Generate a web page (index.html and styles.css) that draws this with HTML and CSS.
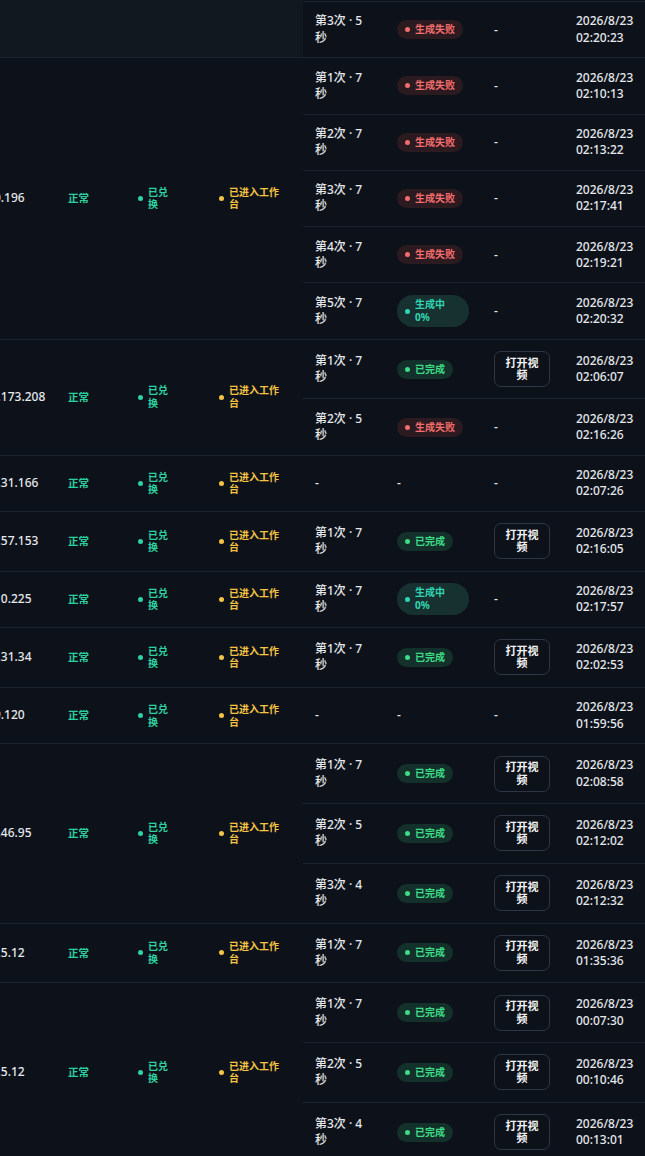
FILE: index.html
```html
<!DOCTYPE html>
<html lang="zh-CN">
<head>
<meta charset="utf-8">
<title>生成记录</title>
<link rel="stylesheet" href="styles.css">
</head>
<body>
<div class="viewport">
  <div class="table">

    <div class="group partial">
      <div class="lefts"><div class="c c-ip"></div><div class="c c-st"></div><div class="c c-rd"></div><div class="c c-wb"></div></div>
      <div class="subs">
        <div class="sub"><div class="s s-cnt"><span class="cnt">第3次 · 5 秒</span></div><div class="s s-st"><span class="badge fail"><i class="dot"></i>生成失败</span></div><div class="s s-vd">-</div><div class="s s-tm"><span>2026/8/23</span><span>02:20:23</span></div></div>
      </div>
    </div>

    <div class="group">
      <div class="lefts"><div class="c c-ip">36.8.10.196</div><div class="c c-st"><span class="ok">正常</span></div><div class="c c-rd"><span class="tag teal"><i class="dot"></i><span class="t2">已兑换</span></span></div><div class="c c-wb"><span class="tag amber"><i class="dot"></i><span class="t5">已进入工作台</span></span></div></div>
      <div class="subs">
        <div class="sub"><div class="s s-cnt"><span class="cnt">第1次 · 7 秒</span></div><div class="s s-st"><span class="badge fail"><i class="dot"></i>生成失败</span></div><div class="s s-vd">-</div><div class="s s-tm"><span>2026/8/23</span><span>02:10:13</span></div></div>
        <div class="sub"><div class="s s-cnt"><span class="cnt">第2次 · 7 秒</span></div><div class="s s-st"><span class="badge fail"><i class="dot"></i>生成失败</span></div><div class="s s-vd">-</div><div class="s s-tm"><span>2026/8/23</span><span>02:13:22</span></div></div>
        <div class="sub"><div class="s s-cnt"><span class="cnt">第3次 · 7 秒</span></div><div class="s s-st"><span class="badge fail"><i class="dot"></i>生成失败</span></div><div class="s s-vd">-</div><div class="s s-tm"><span>2026/8/23</span><span>02:17:41</span></div></div>
        <div class="sub"><div class="s s-cnt"><span class="cnt">第4次 · 7 秒</span></div><div class="s s-st"><span class="badge fail"><i class="dot"></i>生成失败</span></div><div class="s s-vd">-</div><div class="s s-tm"><span>2026/8/23</span><span>02:19:21</span></div></div>
        <div class="sub"><div class="s s-cnt"><span class="cnt">第5次 · 7 秒</span></div><div class="s s-st"><span class="badge prog"><i class="dot"></i><span>生成中<br>0%</span></span></div><div class="s s-vd">-</div><div class="s s-tm"><span>2026/8/23</span><span>02:20:32</span></div></div>
      </div>
    </div>

    <div class="group">
      <div class="lefts"><div class="c c-ip">112.64.173.208</div><div class="c c-st"><span class="ok">正常</span></div><div class="c c-rd"><span class="tag teal"><i class="dot"></i><span class="t2">已兑换</span></span></div><div class="c c-wb"><span class="tag amber"><i class="dot"></i><span class="t5">已进入工作台</span></span></div></div>
      <div class="subs">
        <div class="sub"><div class="s s-cnt"><span class="cnt">第1次 · 7 秒</span></div><div class="s s-st"><span class="badge done"><i class="dot"></i>已完成</span></div><div class="s s-vd"><button class="btn">打开视频</button></div><div class="s s-tm"><span>2026/8/23</span><span>02:06:07</span></div></div>
        <div class="sub"><div class="s s-cnt"><span class="cnt">第2次 · 5 秒</span></div><div class="s s-st"><span class="badge fail"><i class="dot"></i>生成失败</span></div><div class="s s-vd">-</div><div class="s s-tm"><span>2026/8/23</span><span>02:16:26</span></div></div>
      </div>
    </div>

    <div class="group">
      <div class="lefts"><div class="c c-ip">183.12.31.166</div><div class="c c-st"><span class="ok">正常</span></div><div class="c c-rd"><span class="tag teal"><i class="dot"></i><span class="t2">已兑换</span></span></div><div class="c c-wb"><span class="tag amber"><i class="dot"></i><span class="t5">已进入工作台</span></span></div></div>
      <div class="subs">
        <div class="sub"><div class="s s-cnt">-</div><div class="s s-st">-</div><div class="s s-vd">-</div><div class="s s-tm"><span>2026/8/23</span><span>02:07:26</span></div></div>
      </div>
    </div>

    <div class="group">
      <div class="lefts"><div class="c c-ip">27.115.57.153</div><div class="c c-st"><span class="ok">正常</span></div><div class="c c-rd"><span class="tag teal"><i class="dot"></i><span class="t2">已兑换</span></span></div><div class="c c-wb"><span class="tag amber"><i class="dot"></i><span class="t5">已进入工作台</span></span></div></div>
      <div class="subs">
        <div class="sub"><div class="s s-cnt"><span class="cnt">第1次 · 7 秒</span></div><div class="s s-st"><span class="badge done"><i class="dot"></i>已完成</span></div><div class="s s-vd"><button class="btn">打开视频</button></div><div class="s s-tm"><span>2026/8/23</span><span>02:16:05</span></div></div>
      </div>
    </div>

    <div class="group">
      <div class="lefts"><div class="c c-ip">61.48.10.225</div><div class="c c-st"><span class="ok">正常</span></div><div class="c c-rd"><span class="tag teal"><i class="dot"></i><span class="t2">已兑换</span></span></div><div class="c c-wb"><span class="tag amber"><i class="dot"></i><span class="t5">已进入工作台</span></span></div></div>
      <div class="subs">
        <div class="sub"><div class="s s-cnt"><span class="cnt">第1次 · 7 秒</span></div><div class="s s-st"><span class="badge prog"><i class="dot"></i><span>生成中<br>0%</span></span></div><div class="s s-vd">-</div><div class="s s-tm"><span>2026/8/23</span><span>02:17:57</span></div></div>
      </div>
    </div>

    <div class="group">
      <div class="lefts"><div class="c c-ip">112.96.31.34</div><div class="c c-st"><span class="ok">正常</span></div><div class="c c-rd"><span class="tag teal"><i class="dot"></i><span class="t2">已兑换</span></span></div><div class="c c-wb"><span class="tag amber"><i class="dot"></i><span class="t5">已进入工作台</span></span></div></div>
      <div class="subs">
        <div class="sub"><div class="s s-cnt"><span class="cnt">第1次 · 7 秒</span></div><div class="s s-st"><span class="badge done"><i class="dot"></i>已完成</span></div><div class="s s-vd"><button class="btn">打开视频</button></div><div class="s s-tm"><span>2026/8/23</span><span>02:02:53</span></div></div>
      </div>
    </div>

    <div class="group">
      <div class="lefts"><div class="c c-ip">14.7.29.120</div><div class="c c-st"><span class="ok">正常</span></div><div class="c c-rd"><span class="tag teal"><i class="dot"></i><span class="t2">已兑换</span></span></div><div class="c c-wb"><span class="tag amber"><i class="dot"></i><span class="t5">已进入工作台</span></span></div></div>
      <div class="subs">
        <div class="sub"><div class="s s-cnt">-</div><div class="s s-st">-</div><div class="s s-vd">-</div><div class="s s-tm"><span>2026/8/23</span><span>01:59:56</span></div></div>
      </div>
    </div>

    <div class="group">
      <div class="lefts"><div class="c c-ip">223.10.46.95</div><div class="c c-st"><span class="ok">正常</span></div><div class="c c-rd"><span class="tag teal"><i class="dot"></i><span class="t2">已兑换</span></span></div><div class="c c-wb"><span class="tag amber"><i class="dot"></i><span class="t5">已进入工作台</span></span></div></div>
      <div class="subs">
        <div class="sub"><div class="s s-cnt"><span class="cnt">第1次 · 7 秒</span></div><div class="s s-st"><span class="badge done"><i class="dot"></i>已完成</span></div><div class="s s-vd"><button class="btn">打开视频</button></div><div class="s s-tm"><span>2026/8/23</span><span>02:08:58</span></div></div>
        <div class="sub"><div class="s s-cnt"><span class="cnt">第2次 · 5 秒</span></div><div class="s s-st"><span class="badge done"><i class="dot"></i>已完成</span></div><div class="s s-vd"><button class="btn">打开视频</button></div><div class="s s-tm"><span>2026/8/23</span><span>02:12:02</span></div></div>
        <div class="sub"><div class="s s-cnt"><span class="cnt">第3次 · 4 秒</span></div><div class="s s-st"><span class="badge done"><i class="dot"></i>已完成</span></div><div class="s s-vd"><button class="btn">打开视频</button></div><div class="s s-tm"><span>2026/8/23</span><span>02:12:32</span></div></div>
      </div>
    </div>

    <div class="group">
      <div class="lefts"><div class="c c-ip">101.22.5.12</div><div class="c c-st"><span class="ok">正常</span></div><div class="c c-rd"><span class="tag teal"><i class="dot"></i><span class="t2">已兑换</span></span></div><div class="c c-wb"><span class="tag amber"><i class="dot"></i><span class="t5">已进入工作台</span></span></div></div>
      <div class="subs">
        <div class="sub"><div class="s s-cnt"><span class="cnt">第1次 · 7 秒</span></div><div class="s s-st"><span class="badge done"><i class="dot"></i>已完成</span></div><div class="s s-vd"><button class="btn">打开视频</button></div><div class="s s-tm"><span>2026/8/23</span><span>01:35:36</span></div></div>
      </div>
    </div>

    <div class="group">
      <div class="lefts"><div class="c c-ip">117.61.5.12</div><div class="c c-st"><span class="ok">正常</span></div><div class="c c-rd"><span class="tag teal"><i class="dot"></i><span class="t2">已兑换</span></span></div><div class="c c-wb"><span class="tag amber"><i class="dot"></i><span class="t5">已进入工作台</span></span></div></div>
      <div class="subs">
        <div class="sub"><div class="s s-cnt"><span class="cnt">第1次 · 7 秒</span></div><div class="s s-st"><span class="badge done"><i class="dot"></i>已完成</span></div><div class="s s-vd"><button class="btn">打开视频</button></div><div class="s s-tm"><span>2026/8/23</span><span>00:07:30</span></div></div>
        <div class="sub"><div class="s s-cnt"><span class="cnt">第2次 · 5 秒</span></div><div class="s s-st"><span class="badge done"><i class="dot"></i>已完成</span></div><div class="s s-vd"><button class="btn">打开视频</button></div><div class="s s-tm"><span>2026/8/23</span><span>00:10:46</span></div></div>
        <div class="sub"><div class="s s-cnt"><span class="cnt">第3次 · 4 秒</span></div><div class="s s-st"><span class="badge done"><i class="dot"></i>已完成</span></div><div class="s s-vd"><button class="btn">打开视频</button></div><div class="s s-tm"><span>2026/8/23</span><span>00:13:01</span></div></div>
      </div>
    </div>

  </div>
</div>
</body>
</html>
```

FILE: styles.css
```css
* { box-sizing: border-box; }
html, body {
  margin: 0;
  padding: 0;
  background: #0d121a;
}
body {
  font-family: "Noto Sans", "Noto Sans CJK SC", sans-serif;
  font-size: 12px;
  line-height: 16.25px;
  color: #e6e8ec;
  font-weight: 500;
}
.viewport {
  width: 645px;
  overflow: hidden;
}
.table {
  width: 697px;
  margin-left: -52px;
}
.group {
  display: flex;
  border-bottom: 1px solid #1b2230;
}
.lefts {
  display: flex;
  width: 355px;
}
.partial .lefts { background: #111820; }
.partial .subs { padding-top: 1px; }
.partial .sub { border-top: 1px solid #1b2230; }

.c {
  display: flex;
  align-items: center;
  padding: 0 12px;
}
.c-ip { width: 108px; white-space: nowrap; }
.c-st { width: 70px; }
.c-rd { width: 81px; }
.c-wb { width: 96px; }

.ok {
  color: #2ccf9f;
  font-size: 10.5px;
  font-weight: 700;
}
.tag {
  display: inline-flex;
  align-items: center;
  gap: 5px;
  font-size: 10px;
  line-height: 12.75px;
  font-weight: 700;
}
.tag.teal { color: #2ed3a3; }
.tag.amber { color: #f5c343; }
.t2 { width: 22px; }
.t5 { width: 50px; }

.dot {
  display: block;
  flex: none;
  width: 5px;
  height: 5px;
  border-radius: 50%;
  background: currentColor;
}

.subs {
  display: flex;
  flex-direction: column;
  width: 342px;
}
.sub {
  display: flex;
  align-items: center;
  padding: 11.4px 0;
}
.sub + .sub { border-top: 1px solid #1b2230; }
.s { padding: 0 12px; }
.s-cnt { width: 82px; }
.s-st { width: 97px; }
.s-vd { width: 82px; }
.s-tm { width: 81px; white-space: nowrap; }
.s-tm span { display: block; }
.cnt { display: block; max-width: 50px; }

.badge {
  display: inline-flex;
  align-items: center;
  gap: 5px;
  padding: 3px 8px;
  border-radius: 10px;
  font-size: 10px;
  line-height: 13px;
  font-weight: 700;
  white-space: nowrap;
}
.badge.fail { background: #2b1a20; color: #f36d6d; }
.badge.done { background: #13302a; color: #3ddc87; }
.badge.prog {
  background: #163130;
  color: #31d6b3;
  width: 72px;
  border-radius: 16px;
}

.btn {
  display: block;
  width: 56px;
  padding: 4.5px 10px;
  border: 1px solid #2c3646;
  border-radius: 7px;
  background: transparent;
  color: #f1f3f5;
  font-family: inherit;
  font-size: 11px;
  line-height: 12.5px;
  font-weight: 700;
  text-align: center;
}
```
